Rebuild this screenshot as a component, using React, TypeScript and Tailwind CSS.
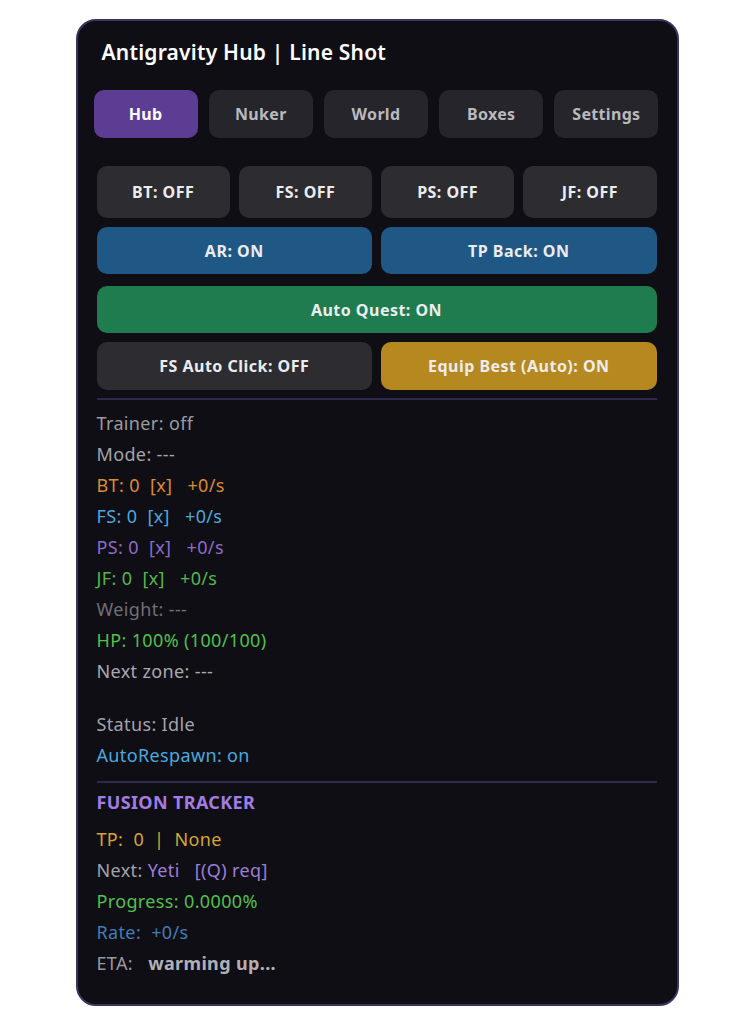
import React from 'react';

type Line = { text: React.ReactNode; cls: string };

const tabs = ['Hub', 'Nuker', 'World', 'Boxes', 'Settings'];

function Toggle({ label, cls, h = 'h-[47px]' }: { label: string; cls: string; h?: string }) {
  return (
    <button className={`${h} ${cls} flex items-center justify-center rounded-[10px] text-[16px] font-bold tracking-[0.03em] text-[#ececef]`}>
      {label}
    </button>
  );
}

export default function App() {
  const stats: Line[] = [
    { text: 'Trainer: off', cls: 'text-[#9b9ba0]' },
    { text: 'Mode: ---', cls: 'text-[#a3a3a8]' },
    { text: <>BT: 0&nbsp;&nbsp;[x]&nbsp;&nbsp;&nbsp;+0/s</>, cls: 'text-[#dc8b2f]' },
    { text: <>FS: 0&nbsp;&nbsp;[x]&nbsp;&nbsp;&nbsp;+0/s</>, cls: 'text-[#4ba8de]' },
    { text: <>PS: 0&nbsp;&nbsp;[x]&nbsp;&nbsp;&nbsp;+0/s</>, cls: 'text-[#8d6bc8]' },
    { text: <>JF: 0&nbsp;&nbsp;[x]&nbsp;&nbsp;&nbsp;+0/s</>, cls: 'text-[#52b84a]' },
    { text: 'Weight: ---', cls: 'text-[#6f6f74]' },
    { text: 'HP: 100% (100/100)', cls: 'text-[#52c04b]' },
    { text: 'Next zone: ---', cls: 'text-[#aaaaae]' },
  ];

  return (
    <div className="min-h-screen bg-white flex justify-center pt-[19px] font-['Noto_Sans',sans-serif]">
      <div className="w-[603px] h-[987px] rounded-[20px] border-2 border-[#3d3160] bg-[#0f0e14] pl-[19px] pr-[20px] pt-[16px]">
        {/* Header */}
        <h1 className="pl-[5px] text-[21px] font-semibold tracking-[0.01em] text-white leading-[30px]">
          Antigravity Hub | Line Shot
        </h1>

        {/* Tabs */}
        <div className="-ml-[3px] -mr-[2px] mt-[23px] grid grid-cols-5 gap-[11px]">
          {tabs.map((t, i) => (
            <button
              key={t}
              className={`h-[48px] rounded-[10px] text-[16px] font-bold tracking-[0.02em] ${
                i === 0 ? 'bg-[#5c3d93] text-white' : 'bg-[#26252b] text-[#b9b9be]'
              }`}
            >
              {t}
            </button>
          ))}
        </div>

        {/* Toggles */}
        <div className="mt-[28px] flex flex-col gap-[9px]">
          <div className="grid grid-cols-4 gap-[9px]">
            <Toggle label="BT: OFF" cls="bg-[#2c2c31]" h="h-[52px]" />
            <Toggle label="FS: OFF" cls="bg-[#2c2c31]" h="h-[52px]" />
            <Toggle label="PS: OFF" cls="bg-[#2c2c31]" h="h-[52px]" />
            <Toggle label="JF: OFF" cls="bg-[#2c2c31]" h="h-[52px]" />
          </div>
          <div className="grid grid-cols-2 gap-[9px]">
            <Toggle label="AR: ON" cls="bg-[#1f5884]" />
            <Toggle label="TP Back: ON" cls="bg-[#1f5884]" />
          </div>
          <div className="mt-[3px]">
            <Toggle label="Auto Quest: ON" cls="bg-[#1f7c4e] w-full" />
          </div>
          <div className="grid grid-cols-2 gap-[9px]">
            <Toggle label="FS Auto Click: OFF" cls="bg-[#2c2c31]" h="h-[48px]" />
            <Toggle label="Equip Best (Auto): ON" cls="bg-[#b5891f]" h="h-[48px]" />
          </div>
        </div>

        {/* Live stats */}
        <div className="mt-[8px] border-t-2 border-[#30284d] pt-[8px] text-[18px] tracking-[0.02em] leading-[31px]">
          {stats.map((s, i) => (
            <div key={i} className={s.cls}>
              {s.text}
            </div>
          ))}
          <div className="h-[22px]" />
          <div className="text-[#a3a3a8]">Status: Idle</div>
          <div className="text-[#4ba8de]">AutoRespawn: on</div>
        </div>

        {/* Fusion tracker */}
        <div className="mt-[10px] border-t-2 border-[#30284d] pt-[4px] text-[18px] tracking-[0.02em] leading-[31px]">
          <div className="font-bold text-[#a27de2]">FUSION TRACKER</div>
          <div className="mt-[6px] text-[#d7a432]">TP:&nbsp; 0&nbsp; |&nbsp; None</div>
          <div className="text-[#a3a3a8]">
            Next: <span className="text-[#9b7fd6]">Yeti&nbsp;&nbsp; [(Q) req]</span>
          </div>
          <div className="text-[#52c04b]">Progress: 0.0000%</div>
          <div className="text-[#3f7eb8]">Rate:&nbsp; +0/s</div>
          <div className="text-[#98989d]">
            ETA:&nbsp;&nbsp; <span className="font-bold text-[#b1b1b5]">warming up...</span>
          </div>
        </div>
      </div>
    </div>
  );
}
